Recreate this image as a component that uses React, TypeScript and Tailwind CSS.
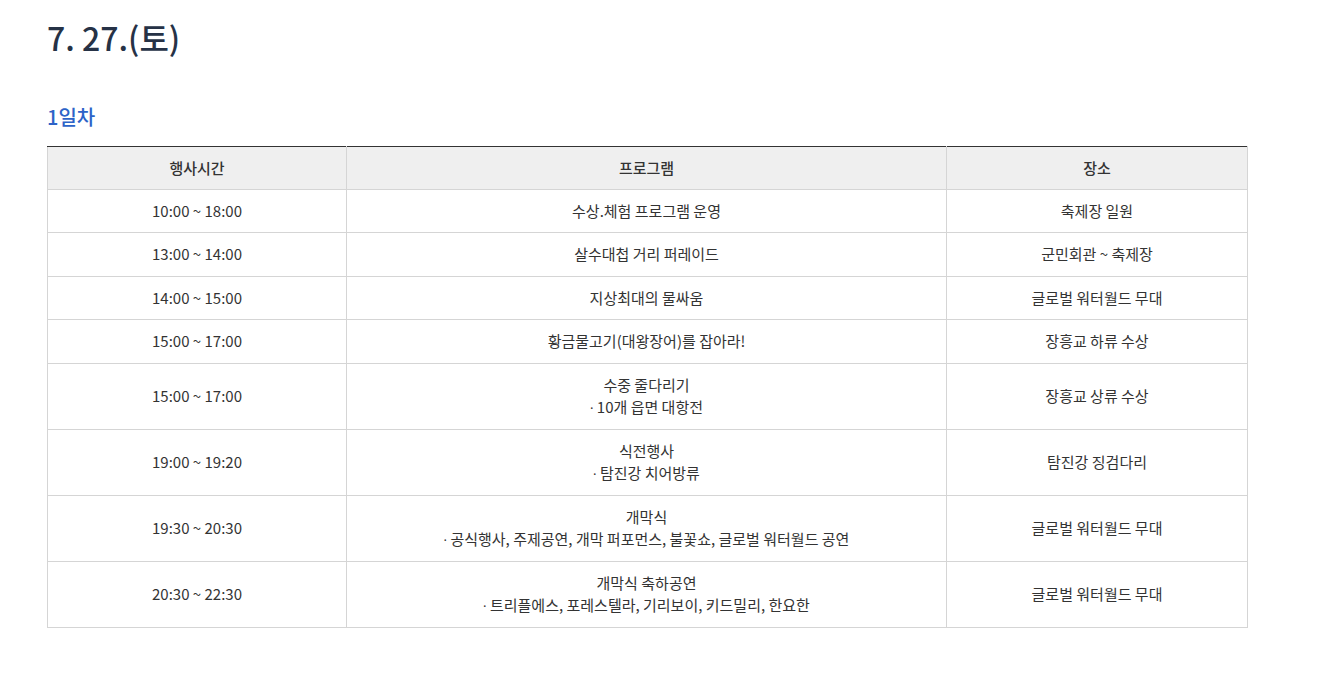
import React from 'react';

const rows = [
  { time: '10:00 ~ 18:00', program: ['수상.체험 프로그램 운영'], place: '축제장 일원' },
  { time: '13:00 ~ 14:00', program: ['살수대첩 거리 퍼레이드'], place: '군민회관 ~ 축제장' },
  { time: '14:00 ~ 15:00', program: ['지상최대의 물싸움'], place: '글로벌 워터월드 무대' },
  { time: '15:00 ~ 17:00', program: ['황금물고기(대왕장어)를 잡아라!'], place: '장흥교 하류 수상' },
  { time: '15:00 ~ 17:00', program: ['수중 줄다리기'], sub: '10개 읍면 대항전', place: '장흥교 상류 수상' },
  { time: '19:00 ~ 19:20', program: ['식전행사'], sub: '탐진강 치어방류', place: '탐진강 징검다리' },
  {
    time: '19:30 ~ 20:30',
    program: ['개막식'],
    sub: '공식행사, 주제공연, 개막 퍼포먼스, 불꽃쇼, 글로벌 워터월드 공연',
    place: '글로벌 워터월드 무대',
  },
  {
    time: '20:30 ~ 22:30',
    program: ['개막식 축하공연'],
    sub: '트리플에스, 포레스텔라, 기리보이, 키드밀리, 한요한',
    place: '글로벌 워터월드 무대',
  },
];

const App: React.FC = () => {
  return (
    <div
      className="min-h-screen bg-white pl-[47px] pt-[14px] text-[#333]"
      style={{ fontFamily: '"Noto Sans CJK KR", "Noto Sans", sans-serif' }}
    >
      {/* Date */}
      <h2 className="text-[32px] leading-[46px] font-medium text-[#263246]">7. 27.(토)</h2>

      {/* Day label */}
      <h3 className="mt-[43px] text-[20px] leading-[28px] font-medium text-[#2d63c8]">1일차</h3>

      {/* Schedule table */}
      <table className="mt-[15px] w-[1200px] border-collapse table-fixed text-[15px] leading-[22.5px] text-center">
        <colgroup>
          <col className="w-[299px]" />
          <col className="w-[600px]" />
          <col className="w-[301px]" />
        </colgroup>
        <thead>
          <tr className="bg-[#efefef]">
            <th className="border border-[#d5d5d5] border-t-[#333] py-[9.5px] font-medium">행사시간</th>
            <th className="border border-[#d5d5d5] border-t-[#333] py-[9.5px] font-medium">프로그램</th>
            <th className="border border-[#d5d5d5] border-t-[#333] py-[9.5px] font-medium">장소</th>
          </tr>
        </thead>
        <tbody>
          {rows.map((r, i) => (
            <tr key={i}>
              <td className="border border-[#d5d5d5] py-[10px]">{r.time}</td>
              <td className="border border-[#d5d5d5] py-[10px]">
                {r.program.map((line, j) => (
                  <div key={j}>{line}</div>
                ))}
                {r.sub && (
                  <div className="h-[22.5px]">
                    <span className="font-['Noto_Sans'] text-[13px] leading-[0]">·</span> {r.sub}
                  </div>
                )}
              </td>
              <td className="border border-[#d5d5d5] py-[10px]">{r.place}</td>
            </tr>
          ))}
        </tbody>
      </table>
    </div>
  );
};

export default App;
